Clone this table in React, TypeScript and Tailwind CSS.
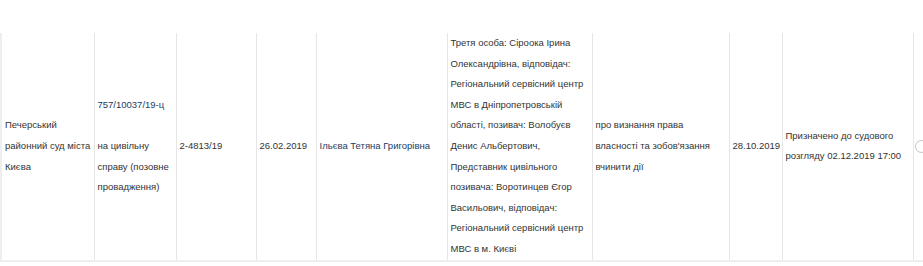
import React from 'react';

const cell = 'border-r border-[#e6e6e6] px-[3px] align-middle';

const App: React.FC = () => {
    return (
        <div className="w-[923px] h-[266px] overflow-hidden bg-white pt-[33px]">
            <table
                className="table-fixed border-collapse text-[9.5px] leading-[20.6px] text-[#333]"
                style={{ width: 960, fontFamily: '"Liberation Sans", Arial, sans-serif' }}
            >
                <colgroup>
                    <col className="w-[93px]" />
                    <col className="w-[82px]" />
                    <col className="w-[80px]" />
                    <col className="w-[60px]" />
                    <col className="w-[131px]" />
                    <col className="w-[145px]" />
                    <col className="w-[137px]" />
                    <col className="w-[53px]" />
                    <col className="w-[131px]" />
                    <col className="w-[48px]" />
                </colgroup>
                <tbody>
                    <tr className="h-[227px] border-b-2 border-[#eeeeee]">
                        <td className={`${cell} border-l-2 border-l-[#eeeeee]`}>Печерський районний суд міста Києва</td>
                        <td className={cell}>
                            <a href="#" className="text-[#1d3d63]">757/10037/19-ц</a>
                            <br />
                            <br />
                            на цивільну справу (позовне провадження)
                        </td>
                        <td className={cell}>2-4813/19</td>
                        <td className={cell}>26.02.2019</td>
                        <td className={cell}>
                            <a href="#" className="text-[#1d3d63]">Ільєва Тетяна Григорівна</a>
                        </td>
                        <td className={cell}>
                            Третя особа: Сіроока Ірина Олександрівна, відповідач: Регіональний сервісний центр МВС в
                            Дніпропетровській області, позивач: Волобуєв Денис Альбертович, Представник цивільного
                            позивача: Воротинцев Єгор Васильович, відповідач: Регіональний сервісний центр МВС в м.
                            Києві
                        </td>
                        <td className={cell}>про визнання права власності та зобов'язання вчинити дії</td>
                        <td className={cell}>28.10.2019</td>
                        <td className={cell}>Призначено до судового розгляду 02.12.2019 17:00</td>
                        <td className="px-[1px] align-middle">
                            <span className="block w-[13px] h-[13px] rounded-full border border-[#c4c4c4] bg-white" />
                        </td>
                    </tr>
                </tbody>
            </table>
        </div>
    );
};

export default App;
